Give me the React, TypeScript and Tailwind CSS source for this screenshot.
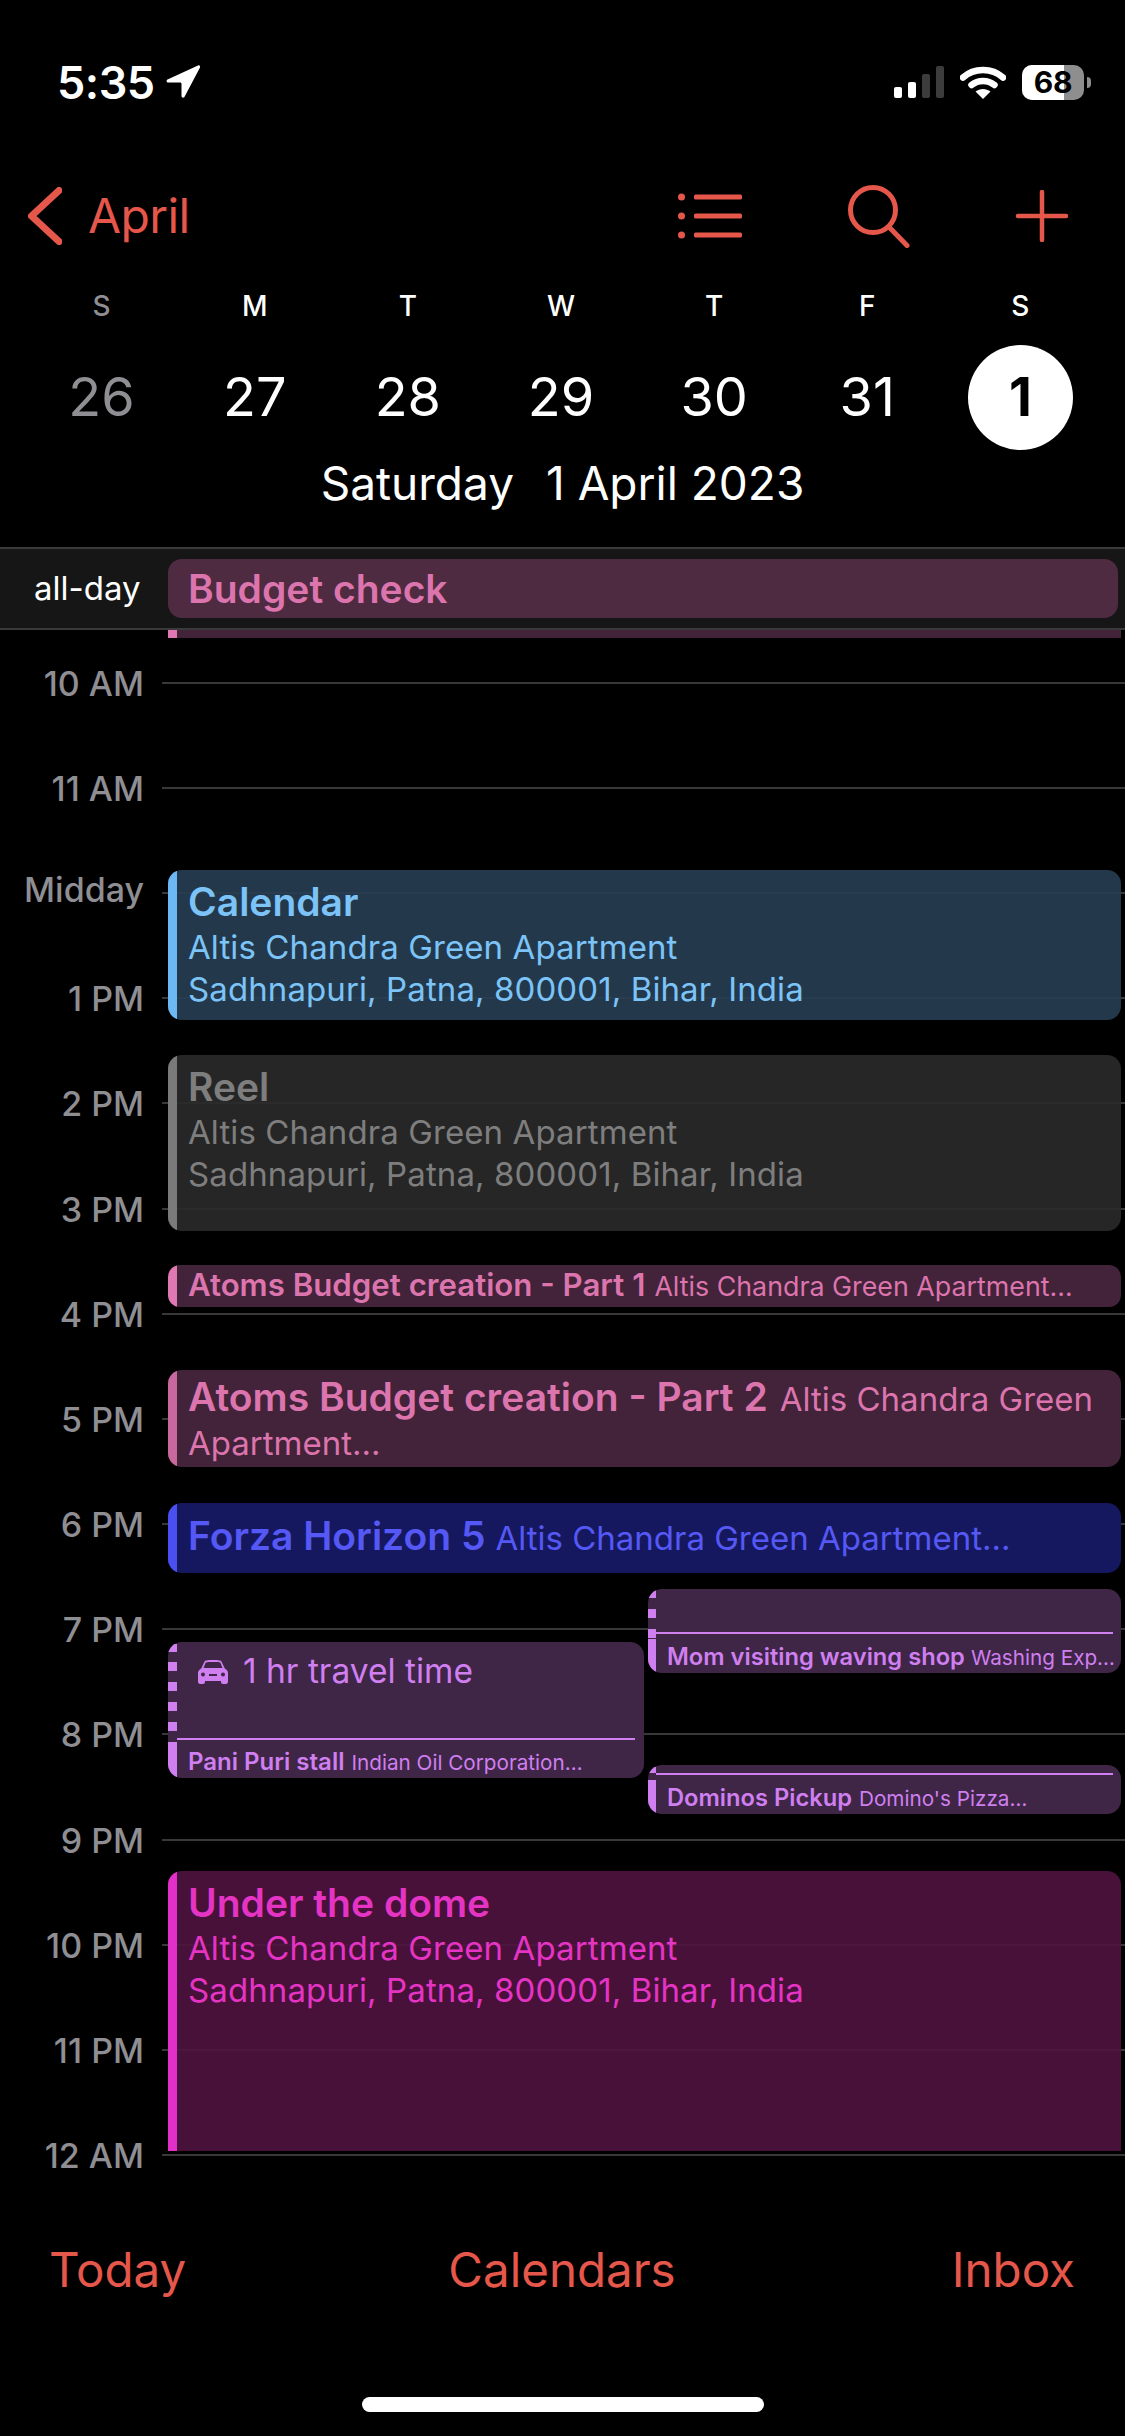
const hours = ['10 AM', '11 AM', 'Midday', '1 PM', '2 PM', '3 PM', '4 PM', '5 PM', '6 PM', '7 PM', '8 PM', '9 PM', '10 PM', '11 PM', '12 AM']
const days = [
  { l: 'S', d: '26', dim: true },
  { l: 'M', d: '27' },
  { l: 'T', d: '28' },
  { l: 'W', d: '29' },
  { l: 'T', d: '30' },
  { l: 'F', d: '31' },
  { l: 'S', d: '1', today: true },
]
const ADDRESS1 = 'Altis Chandra Green Apartment'
const ADDRESS2 = 'Sadhnapuri, Patna, 800001, Bihar, India'

function StatusBar() {
  return (
    <div className="flex items-center h-[44px] mt-[60px] pl-[57px] pr-[34px]">
      <span className="text-[45px] font-semibold text-white tracking-[-0.5px] leading-none">5:35</span>
      <svg width="36" height="36" viewBox="0 0 36 36" className="ml-[10px]">
        <path d="M33 1.500 2.500 15.500c-1.500.7-1 3 .7 3H15c1 0 1.500.5 1.500 1.500v12c0 2 2.500 2.300 3.200.5L35 3.500C35.500 2 34.500.8 33 1.500Z" fill="#fff" />
      </svg>
      <div className="ml-auto flex items-end gap-[5.500px] h-[32px]">
        <div className="w-[8.500px] h-[11px] rounded-[2px] bg-white" />
        <div className="w-[8.500px] h-[16px] rounded-[2px] bg-white" />
        <div className="w-[8.500px] h-[24px] rounded-[2px] bg-[#3c3c3c]" />
        <div className="w-[8.500px] h-[32px] rounded-[2px] bg-[#3c3c3c]" />
      </div>
      <svg width="46" height="33" viewBox="0 0 46 33" className="ml-[16px]">
        <path d="M3 11.500C14 1.500 32 1.500 43 11.500" fill="none" stroke="#fff" strokeWidth="6.500" strokeLinecap="round" />
        <path d="M11.500 19C18 13.500 28 13.500 34.500 19" fill="none" stroke="#fff" strokeWidth="6.500" strokeLinecap="round" />
        <path d="M15.500 25.500C20 22 26 22 30.500 25.500L23 33Z" fill="#fff" />
      </svg>
      <div className="relative ml-[16px] w-[62px] h-[35px] rounded-[10px] overflow-hidden bg-[#8e8e8e]">
        <div className="absolute left-0 top-0 bottom-0 w-[42px] bg-white" />
        <span className="absolute inset-0 flex items-center justify-center text-[30px] font-bold text-black leading-none tracking-[-0.3px]">68</span>
      </div>
      <div className="ml-[3px] w-[4px] h-[11px] rounded-r-[4px] bg-[#8e8e8e]" />
    </div>
  )
}

function NavBar() {
  return (
    <div className="flex items-center h-[80px] mt-[72px] pl-[28px] pr-[57px] text-[#e5574a]">
      <svg width="34" height="58" viewBox="0 0 34 58" fill="none" stroke="#e5574a" strokeWidth="7" strokeLinecap="round" strokeLinejoin="round">
        <path d="M31 3.500 3.500 29 31 54.500" />
      </svg>
      <span className="ml-[26px] text-[48px] leading-none tracking-[-0.6px]">April</span>
      <div className="ml-auto flex items-center gap-[106px]">
        <svg width="64" height="46" viewBox="0 0 64 46" fill="#e5574a">
          <circle cx="3.500" cy="4" r="3.500" />
          <circle cx="3.500" cy="23" r="3.500" />
          <circle cx="3.500" cy="42" r="3.500" />
          <rect x="16" y="1.500" width="48" height="5" rx="1.500" />
          <rect x="16" y="20.500" width="48" height="5" rx="1.500" />
          <rect x="16" y="39.500" width="48" height="5" rx="1.500" />
        </svg>
        <svg width="62" height="64" viewBox="0 0 62 64" fill="none" stroke="#e5574a" strokeWidth="5" strokeLinecap="round">
          <circle cx="25" cy="26" r="22.500" />
          <path d="M41 43 59 61.500" />
        </svg>
        <svg width="52" height="52" viewBox="0 0 52 52" fill="none" stroke="#e5574a" strokeWidth="4.500" strokeLinecap="round">
          <path d="M26 2v48M2 26h48" />
        </svg>
      </div>
    </div>
  )
}

function WeekStrip() {
  return (
    <div className="pl-[25px] pr-[28px]">
      <div className="grid grid-cols-7 mt-[30px] h-[40px] items-center text-center">
        {days.map((x, i) => (
          <span key={i} className={`text-[28px] font-medium leading-none ${x.dim ? 'text-[#8e8e93]' : 'text-white'}`}>{x.l}</span>
        ))}
      </div>
      <div className="grid grid-cols-7 mt-[19px] h-[105px] items-center justify-items-center">
        {days.map((x, i) =>
          x.today ? (
            <span key={i} className="w-[105px] h-[105px] rounded-full bg-white text-black font-bold text-[53px] flex items-center justify-center">{x.d}</span>
          ) : (
            <span key={i} className={`text-[54px] leading-none -mt-[2px] ${x.dim ? 'text-[#8e8e93]' : 'text-white'}`}>{x.d}</span>
          ),
        )}
      </div>
    </div>
  )
}

function AllDay() {
  return (
    <div className="mt-[36px] h-[83px] bg-[#161616] border-y-2 border-[#3a3a3c] flex items-center">
      <span className="w-[168px] pl-[34px] text-[33px] text-white leading-none">all-day</span>
      <div className="w-[950px] h-[59px] rounded-[14px] bg-[#4f2b42] flex items-center pl-[20px]">
        <span className="text-[39px] font-semibold text-[#dc75ad] leading-none">Budget check</span>
      </div>
    </div>
  )
}

function Address({ color }: { color: string }) {
  return (
    <div className={`text-[33px] leading-[42px] tracking-[0.1px] ${color}`}>
      <div>{ADDRESS1}</div>
      <div>{ADDRESS2}</div>
    </div>
  )
}

function Timeline() {
  return (
    <div className="relative">
      {hours.map(h => (
        <div key={h} className="flex items-center h-[105.200px]">
          <span className={`w-[144px] text-right text-[34px] font-medium text-[#8e8e93] leading-none ${h === 'Midday' ? '-mt-[5px]' : 'mt-[2px]'}`}>{h}</span>
          <div className="ml-[18px] flex-1 h-[2px] bg-[#38383a]" />
        </div>
      ))}

      {/* tail of the all-day event that peeks out under the header */}
      <div className="absolute top-0 left-[168px] right-[4px] h-[8px] bg-[#43233a]">
        <div className="w-[9px] h-full bg-[#df78b3]" />
      </div>

      <div className="absolute top-[240px] left-[168px] right-[4px] h-[150px] rounded-[14px] overflow-hidden flex bg-[#273f53]/90">
        <div className="w-[9px] shrink-0 bg-[#6cb8f5]" />
        <div className="pl-[11px] pt-[8px] text-[#7cc3f7]">
          <div className="text-[39px] font-semibold leading-[48px]">Calendar</div>
          <Address color="text-[#7cc3f7]" />
        </div>
      </div>

      <div className="absolute top-[425px] left-[168px] right-[4px] h-[176px] rounded-[14px] overflow-hidden flex bg-[#2a2a2a]/90">
        <div className="w-[9px] shrink-0 bg-[#7a7a7a]" />
        <div className="pl-[11px] pt-[8px]">
          <div className="text-[39px] font-semibold leading-[48px] text-[#7e7e7e]">Reel</div>
          <Address color="text-[#7e7e7e]" />
        </div>
      </div>

      <div className="absolute top-[635px] left-[168px] right-[4px] h-[42px] rounded-[12px] overflow-hidden flex bg-[#43233a]">
        <div className="w-[9px] shrink-0 bg-[#df78b3]" />
        <div className="pl-[11px] leading-[40px] whitespace-nowrap text-[#dc75ad]">
          <span className="text-[31.200px] font-semibold">Atoms Budget creation - Part 1</span>
          <span className="text-[26.800px] ml-[9px]">Altis Chandra Green Apartment…</span>
        </div>
      </div>

      <div className="absolute top-[740px] left-[168px] right-[4px] h-[97px] rounded-[14px] overflow-hidden flex bg-[#43233a]">
        <div className="w-[9px] shrink-0 bg-[#c8689e]" />
        <div className="pl-[11px] pt-[6px] text-[#dc75ad]">
          <div className="h-[42px] leading-[42px] whitespace-nowrap">
            <span className="text-[39px] font-semibold">Atoms Budget creation - Part 2</span>
            <span className="text-[33px] ml-[12px]">Altis Chandra Green</span>
          </div>
          <div className="mt-[4px] h-[42px] text-[33px] leading-[42px]">Apartment…</div>
        </div>
      </div>

      <div className="absolute top-[873px] left-[168px] right-[4px] h-[70px] rounded-[14px] overflow-hidden flex bg-[#15185e]">
        <div className="w-[9px] shrink-0 bg-[#4a4ff0]" />
        <div className="pl-[11px] leading-[65px] whitespace-nowrap text-[#5558f5]">
          <span className="text-[39px] font-semibold">Forza Horizon 5</span>
          <span className="text-[33px] ml-[10px]">Altis Chandra Green Apartment…</span>
        </div>
      </div>

      {/* travel time event */}
      <div className="absolute top-[1012px] left-[168px] w-[476px] h-[136px] rounded-[14px] overflow-hidden bg-[#3f2546]">
        <div className="absolute left-0 top-[2px] w-[9px] h-[8px] bg-[#cf7ff0]" />
        <div className="absolute left-0 top-[20px] w-[9px] h-[9px] bg-[#cf7ff0]" />
        <div className="absolute left-0 top-[40px] w-[9px] h-[9px] bg-[#cf7ff0]" />
        <div className="absolute left-0 top-[60px] w-[9px] h-[9px] bg-[#cf7ff0]" />
        <div className="absolute left-0 top-[80px] w-[9px] h-[9px] bg-[#cf7ff0]" />
        <div className="absolute left-0 top-[100px] bottom-0 w-[9px] bg-[#cf7ff0]" />
        <div className="absolute left-[9px] right-[9px] top-[96px] h-[2px] bg-[#cf7ff0]" />
        <div className="flex items-center pl-[30px] pt-[10px] h-[49px]">
          <svg width="30" height="24" viewBox="0 0 30 24" fill="#cf7ff0">
            <path d="M6.500 1.500C7.300.5 9 0 15 0s7.700.5 8.500 1.500L26.800 8.500C28.800 10 30 11 30 13v8.500c0 1.500-.8 2.500-2 2.500h-3c-1.200 0-2-.8-2-2v-1H7v1c0 1.200-.8 2-2 2H2c-1.200 0-2-1-2-2.500V13c0-2 1.200-3 3.200-4.500ZM7.500 3 5.500 8h19l-2-5C22 2.200 20 2 15 2S8 2.200 7.500 3ZM5 12.500a2 2 0 1 0 0 4 2 2 0 0 0 0-4Zm20 0a2 2 0 1 0 0 4 2 2 0 0 0 0-4ZM11 14v2h8v-2Z" fillRule="evenodd" />
          </svg>
          <span className="ml-[15px] text-[33.500px] text-[#cf7ff0] leading-none">1 hr travel time</span>
        </div>
        <div className="absolute left-[20px] top-[106px] leading-[28px] whitespace-nowrap text-[#cf7ff0]">
          <span className="text-[24px] font-semibold">Pani Puri stall</span>
          <span className="text-[20.700px] ml-[7px]">Indian Oil Corporation…</span>
        </div>
      </div>

      <div className="absolute top-[959px] left-[648px] right-[4px] h-[84px] rounded-[14px] overflow-hidden bg-[#3f2546]">
        <div className="absolute left-0 top-[1px] w-[8px] h-[8px] bg-[#cf7ff0]" />
        <div className="absolute left-0 top-[20px] w-[8px] h-[9px] bg-[#cf7ff0]" />
        <div className="absolute left-0 top-[40px] w-[8px] h-[9px] bg-[#cf7ff0]" />
        <div className="absolute left-0 top-[50px] bottom-0 w-[8px] bg-[#cf7ff0]" />
        <div className="absolute left-[8px] right-[8px] top-[43px] h-[2px] bg-[#cf7ff0]" />
        <div className="absolute left-[19px] top-[54px] leading-[28px] whitespace-nowrap text-[#cf7ff0]">
          <span className="text-[23.700px] font-semibold">Mom visiting waving shop</span>
          <span className="text-[20.700px] ml-[6px]">Washing Exp…</span>
        </div>
      </div>

      <div className="absolute top-[1135px] left-[648px] right-[4px] h-[49px] rounded-[14px] overflow-hidden bg-[#3f2546]">
        <div className="absolute left-0 top-[2px] w-[8px] h-[6px] bg-[#cf7ff0]" />
        <div className="absolute left-0 top-[15px] bottom-0 w-[8px] bg-[#cf7ff0]" />
        <div className="absolute left-[8px] right-[8px] top-[8px] h-[2px] bg-[#cf7ff0]" />
        <div className="absolute left-[19px] top-[19px] leading-[28px] whitespace-nowrap text-[#cf7ff0]">
          <span className="text-[23.700px] font-semibold">Dominos Pickup</span>
          <span className="text-[20.700px] ml-[7px]">Domino's Pizza…</span>
        </div>
      </div>

      <div className="absolute top-[1241px] left-[168px] right-[4px] h-[280px] rounded-t-[14px] overflow-hidden flex bg-[#4f133f]/90">
        <div className="w-[9px] shrink-0 bg-[#e22fc9]" />
        <div className="pl-[11px] pt-[8px]">
          <div className="text-[39px] font-semibold leading-[48px] text-[#e534c4]">Under the dome</div>
          <Address color="text-[#e534c4]" />
        </div>
      </div>
    </div>
  )
}

export default function App() {
  return (
    <div className="w-[1125px] h-[2436px] bg-black overflow-hidden font-['Inter',sans-serif]">
      <StatusBar />
      <NavBar />
      <WeekStrip />
      <div className="h-[56px] mt-[5px] flex items-center justify-center text-[46px] leading-none text-white">
        <span>Saturday</span>
        <span className="ml-[32px]">1 April 2023</span>
      </div>
      <AllDay />
      <Timeline />
      <div className="mt-[27px] h-[70px] pl-[49px] pr-[50px] grid grid-cols-3 items-center text-[47.500px] leading-none text-[#e5574a]">
        <span>Today</span>
        <span className="text-center">Calendars</span>
        <span className="text-right">Inbox</span>
      </div>
      <div className="mt-[92px] mx-auto w-[402px] h-[15px] rounded-full bg-white" />
    </div>
  )
}
